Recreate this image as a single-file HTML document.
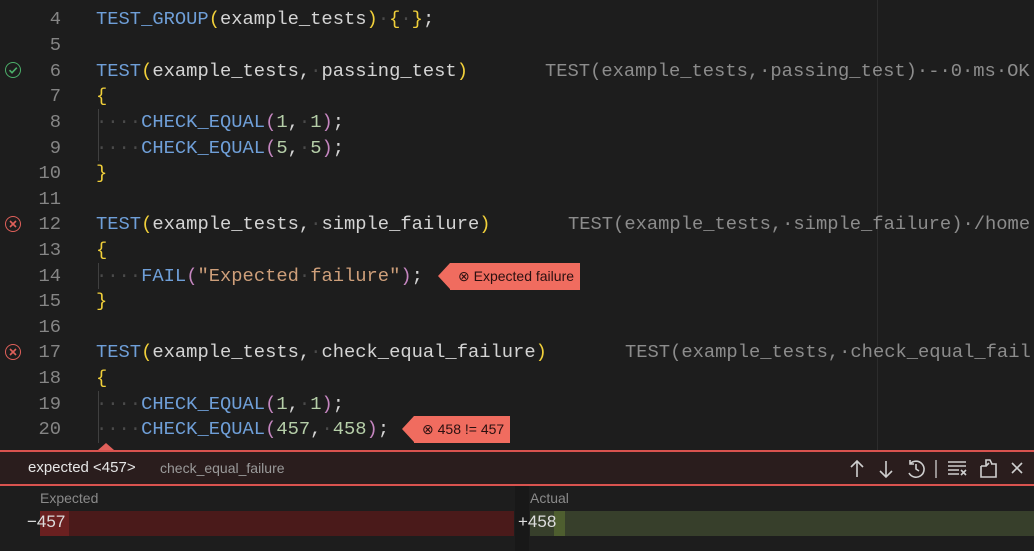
<!DOCTYPE html><html><head><style>
body{margin:0;width:1034px;height:551px;background:#1d1d1d;overflow:hidden;position:relative;font-family:"Liberation Mono",monospace;}
.ln{position:absolute;left:0;width:61px;text-align:right;color:#858585;font-size:18.8px;line-height:26px;}
.c{position:absolute;left:96px;color:#d4d4d4;font-size:18.8px;line-height:26px;white-space:pre;}
.k{color:#6f9fd8}.p{color:#f1d03a}.q{color:#c586c0}.n{color:#b5cea8}.s{color:#ce9f7a}.d{color:#4a4a4a}
.g{position:absolute;color:#8c8c8c;font-size:18.8px;line-height:26px;white-space:pre;}
.ig{position:absolute;left:98px;width:1px;background:#404040;}
.badge{position:absolute;background:#f06c5f;color:#2a1010;font-family:"Liberation Sans",sans-serif;font-size:14px;line-height:27px;padding:0 6px 0 8px;}
.badge:before{content:"";position:absolute;left:-12px;top:0;border-right:12px solid #f06c5f;border-top:13.5px solid transparent;border-bottom:13.5px solid transparent;}
.ico{position:absolute;left:5px;width:14px;height:14px;border:1.6px solid;border-radius:50%;}
</style></head><body>
<div style="position:absolute;left:877px;top:0;width:1px;height:450px;background:#2c2c2c"></div>
<div class="ln" style="top:6px">4</div><div class="c" style="top:6px"><span class="k">TEST_GROUP</span><span class="p">(</span>example_tests<span class="p">)</span><span class="d">·</span><span class="p">{</span><span class="d">·</span><span class="p">}</span>;</div>
<div class="ln" style="top:32px">5</div>
<div class="ico" style="top:62px;border-color:#4caf6a"><svg width="14" height="14" style="position:absolute;left:0;top:0"><path d="M3.5 7.2l2.5 2.5 4.8-5" stroke="#4caf6a" stroke-width="1.6" fill="none"/></svg></div>
<div class="ln" style="top:58px">6</div><div class="c" style="top:58px"><span class="k">TEST</span><span class="p">(</span>example_tests,<span class="d">·</span>passing_test<span class="p">)</span></div>
<div class="g" style="left:545px;top:58px">TEST(example_tests,·passing_test)·-·0·ms·OK</div>
<div class="ln" style="top:83px">7</div><div class="c" style="top:83px"><span class="p">{</span></div>
<div class="ln" style="top:109px">8</div><div class="c" style="top:109px"><span class="d">····</span><span class="k">CHECK_EQUAL</span><span class="q">(</span><span class="n">1</span>,<span class="d">·</span><span class="n">1</span><span class="q">)</span>;</div>
<div class="ln" style="top:135px">9</div><div class="c" style="top:135px"><span class="d">····</span><span class="k">CHECK_EQUAL</span><span class="q">(</span><span class="n">5</span>,<span class="d">·</span><span class="n">5</span><span class="q">)</span>;</div>
<div class="ig" style="top:109px;height:52px"></div>
<div class="ln" style="top:160px">10</div><div class="c" style="top:160px"><span class="p">}</span></div>
<div class="ln" style="top:186px">11</div>
<div class="ico" style="top:216px;border-color:#e0605a"><svg width="14" height="14" style="position:absolute;left:0;top:0"><path d="M4 4l6 6M10 4l-6 6" stroke="#e0605a" stroke-width="1.6"/></svg></div>
<div class="ln" style="top:211px">12</div><div class="c" style="top:211px"><span class="k">TEST</span><span class="p">(</span>example_tests,<span class="d">·</span>simple_failure<span class="p">)</span></div>
<div class="g" style="left:568px;top:211px">TEST(example_tests,·simple_failure)·/home</div>
<div class="ln" style="top:237px">13</div><div class="c" style="top:237px"><span class="p">{</span></div>
<div class="ln" style="top:263px">14</div><div class="c" style="top:263px"><span class="d">····</span><span class="k">FAIL</span><span class="q">(</span><span class="s">"Expected<span class="d">·</span>failure"</span><span class="q">)</span>;</div>
<div class="ig" style="top:263px;height:26px"></div>
<div class="badge" style="left:450px;top:263px">⊗ Expected failure</div>
<div class="ln" style="top:288px">15</div><div class="c" style="top:288px"><span class="p">}</span></div>
<div class="ln" style="top:314px">16</div>
<div class="ico" style="top:344px;border-color:#e0605a"><svg width="14" height="14" style="position:absolute;left:0;top:0"><path d="M4 4l6 6M10 4l-6 6" stroke="#e0605a" stroke-width="1.6"/></svg></div>
<div class="ln" style="top:339px">17</div><div class="c" style="top:339px"><span class="k">TEST</span><span class="p">(</span>example_tests,<span class="d">·</span>check_equal_failure<span class="p">)</span></div>
<div class="g" style="left:625px;top:339px">TEST(example_tests,·check_equal_fail</div>
<div class="ln" style="top:365px">18</div><div class="c" style="top:365px"><span class="p">{</span></div>
<div class="ln" style="top:391px">19</div><div class="c" style="top:391px"><span class="d">····</span><span class="k">CHECK_EQUAL</span><span class="q">(</span><span class="n">1</span>,<span class="d">·</span><span class="n">1</span><span class="q">)</span>;</div>
<div class="ln" style="top:416px">20</div><div class="c" style="top:416px"><span class="d">····</span><span class="k">CHECK_EQUAL</span><span class="q">(</span><span class="n">457</span>,<span class="d">·</span><span class="n">458</span><span class="q">)</span>;</div>
<div class="ig" style="top:391px;height:52px"></div>
<div class="badge" style="left:414px;top:416px">⊗ 458 != 457</div>
<div style="position:absolute;left:98px;top:443px;border-bottom:7px solid #e0605a;border-left:8px solid transparent;border-right:8px solid transparent"></div>
<div style="position:absolute;left:0;top:450px;width:1034px;height:32px;background:#2a1d1d;border-top:2px solid #d9534f;border-bottom:2px solid #d9534f;font-family:'Liberation Sans',sans-serif;">
<span style="position:absolute;left:28px;top:7px;color:#e6e6e6;font-size:15px">expected &lt;457&gt;</span>
<span style="position:absolute;left:160px;top:8px;color:#9a9a9a;font-size:14px">check_equal_failure</span>
<svg width="190" height="32" style="position:absolute;left:844px;top:0" fill="none" stroke="#cfcfcf" stroke-width="1.6">
<path d="M13 25V9M7 15l6-6 6 6"/>
<path d="M42 9v16M36 19l6 6 6-6"/>
<path d="M66 12a8 8 0 1 1 -1 9M66 8v4h4M72 12v5l3 2"/>
<path d="M92 8v18" stroke-width="1.3"/>
<path d="M104 10h18M104 14h18M104 18h11M104 22h11M117 18l5 5M122 18l-5 5"/>
<path d="M137 14v11h15V12h-5M137 14h5V8h4l2 4M142 14l3-3"/>
<path d="M168 11l10 10M178 11l-10 10"/>
</svg>
</div>
<div style="position:absolute;left:40px;top:490px;color:#8a8a8a;font-family:'Liberation Sans',sans-serif;font-size:14px">Expected</div>
<div style="position:absolute;left:530px;top:490px;color:#8a8a8a;font-family:'Liberation Sans',sans-serif;font-size:14px">Actual</div>
<div style="position:absolute;left:515px;top:486px;width:14px;height:65px;background:#181818"></div>
<div style="position:absolute;left:40px;top:511px;width:474px;height:25px;background:#4a1a1a"></div>
<div style="position:absolute;left:40px;top:511px;width:29px;height:25px;background:#6a2020"></div>
<div style="position:absolute;left:530px;top:511px;width:504px;height:25px;background:#373f2b"></div>
<div style="position:absolute;left:554px;top:511px;width:11px;height:25px;background:#4e5e2f"></div>
<div style="position:absolute;left:27px;top:512px;color:#ddd;font-family:'Liberation Sans',sans-serif;font-size:17px">−457</div>
<div style="position:absolute;left:518px;top:512px;color:#ddd;font-family:'Liberation Sans',sans-serif;font-size:17px">+458</div>
</body></html>
